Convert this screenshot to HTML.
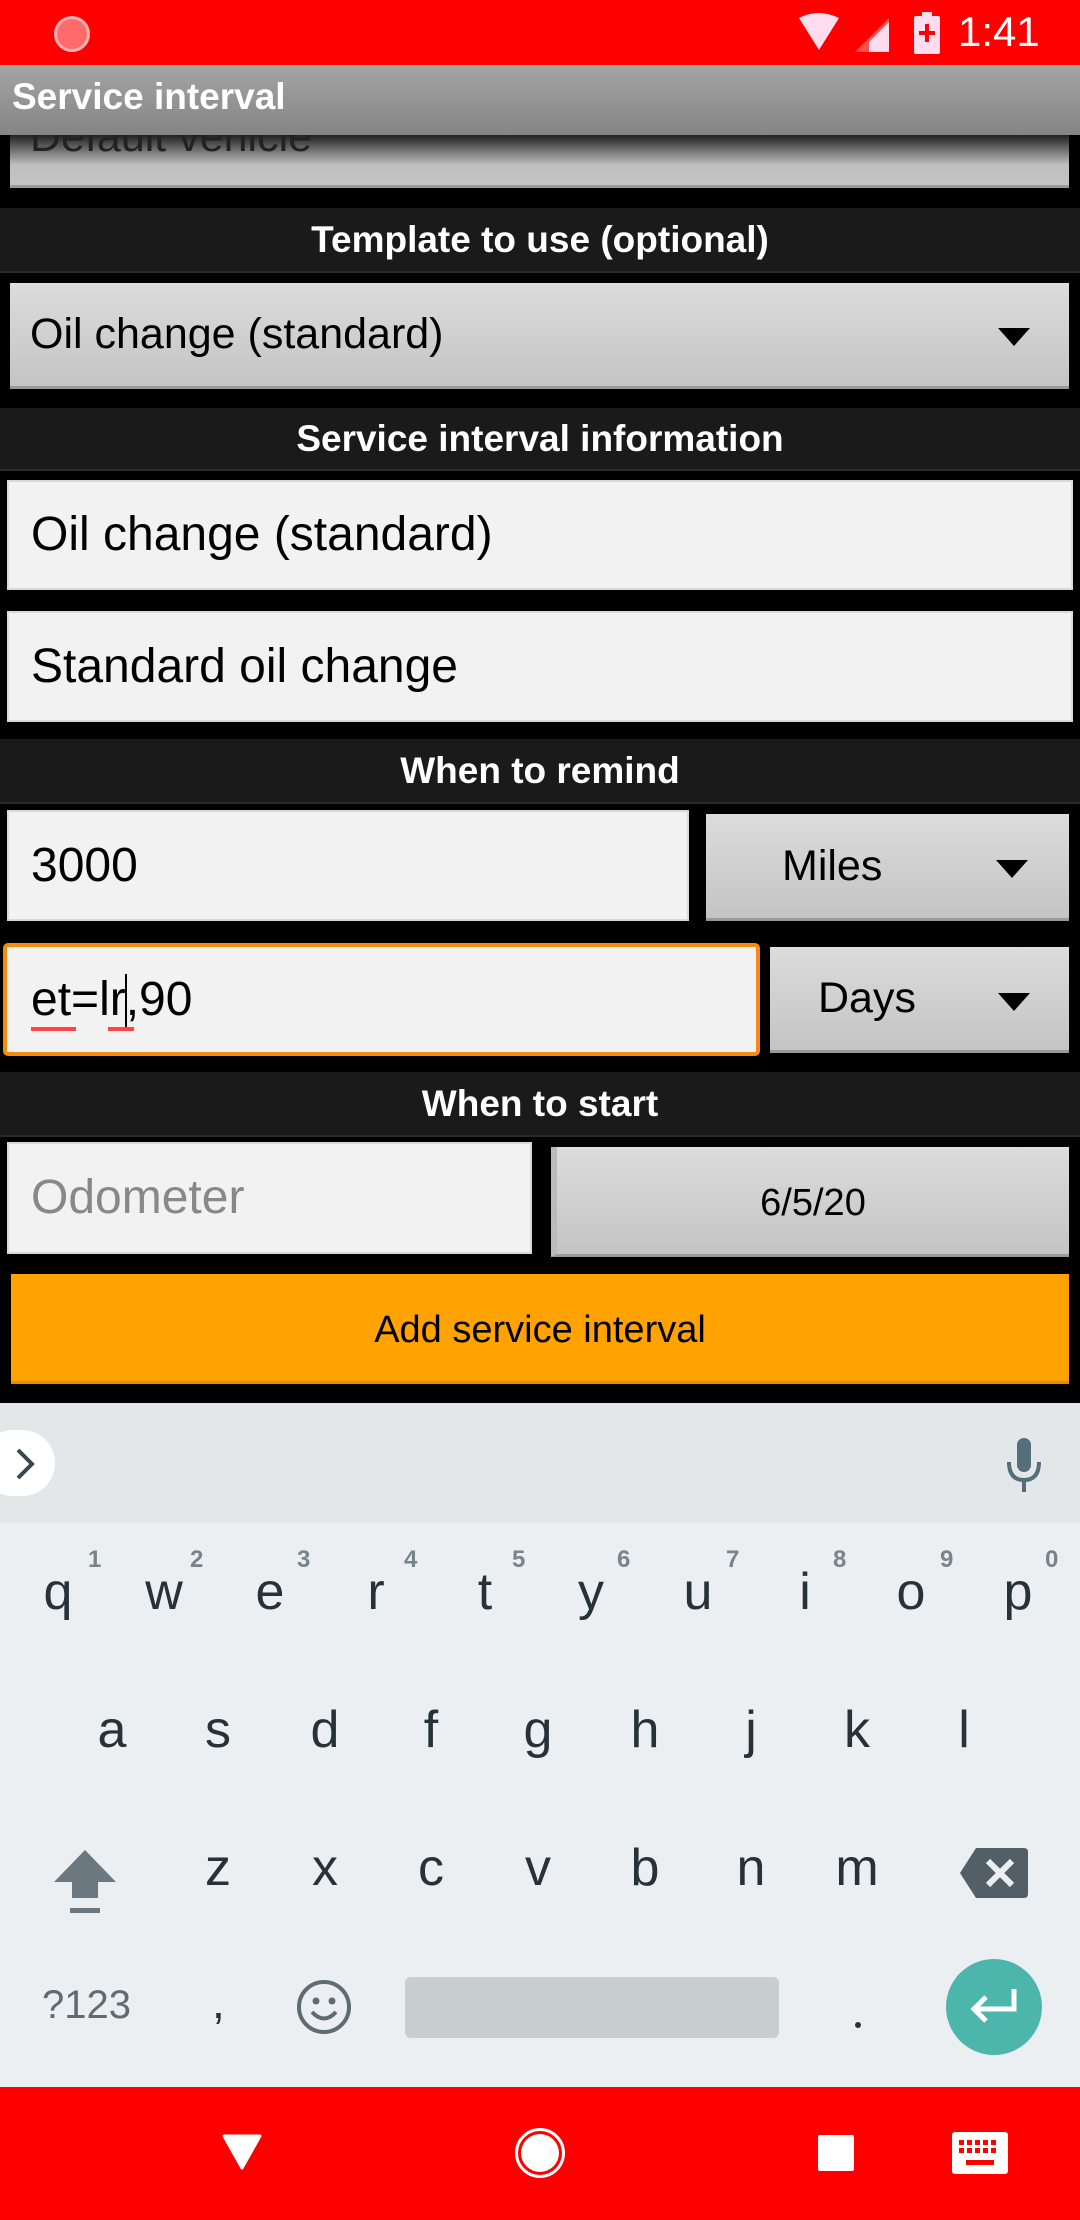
<!DOCTYPE html>
<html><head><meta charset="utf-8"><style>
*{margin:0;padding:0;box-sizing:border-box}
body{width:1080px;height:2220px;background:#000;position:relative;overflow:hidden;font-family:"Liberation Sans",sans-serif}
.a{position:absolute}
.hdr{position:absolute;left:0;width:1080px;background:#1a1a1a;color:#fff;font-weight:bold;font-size:37px;text-align:center;border-bottom:2px solid #2a2a2a}
.sp{position:absolute;background:linear-gradient(#dcdcdc,#c4c4c4);border-bottom:3px solid #9a9a9a;color:#000;font-size:43px}
.ed{position:absolute;background:#f2f2f2;border:2px solid #d8d8d8;color:#000;font-size:48px;padding-left:22px}
.arr{position:absolute;width:0;height:0;border-left:16px solid transparent;border-right:16px solid transparent;border-top:18px solid #000}
.k{position:absolute;font-size:52px;color:#263238;width:80px;text-align:center;font-family:"Liberation Sans",sans-serif}
.n{position:absolute;font-size:24px;color:#78848a;font-weight:bold}
</style></head><body>
<div class="sp" style="left:10px;top:135px;width:1059px;height:53px;background:linear-gradient(#202020,#bfbfbf 60%,#c4c4c4);overflow:hidden"><span class="a" style="left:20px;top:-22px;color:#222">Default vehicle</span></div>
<div class="a" style="left:0;top:0;width:1080px;height:65px;background:#f00"></div>
<div class="a" style="left:54px;top:16px;width:36px;height:36px;border-radius:50%;background:#ff6b6b;border:3px solid #ffb0b0"></div>
<svg class="a" style="left:795px;top:12px" width="120" height="42"><path d="M4 6 Q23 -4 44 6 L24 38 Z" fill="#fde"/><path d="M60 40 L94 40 L94 6 Z" fill="#ff5050"/><path d="M74 40 L94 40 L94 10 L74 30 Z" fill="#fde"/></svg>
<svg class="a" style="left:914px;top:12px" width="26" height="44"><rect x="0" y="4" width="26" height="38" rx="2" fill="#fde"/><rect x="8" y="0" width="10" height="5" fill="#fde"/><path d="M13 12 V30 M5 21 H21" stroke="#f00" stroke-width="4"/></svg>
<div class="a" style="left:958px;top:8px;color:#fff;font-size:42px">1:41</div>
<div class="a" style="left:0;top:65px;width:1080px;height:70px;background:linear-gradient(#a4a4a4,#858585)"></div>
<div class="a" style="left:12px;top:76px;color:#fff;font-weight:bold;font-size:37px">Service interval</div>
<div class="hdr" style="top:208px;height:65px;line-height:63px">Template to use (optional)</div>
<div class="sp" style="left:10px;top:283px;width:1059px;height:106px;line-height:103px;padding-left:20px">Oil change (standard)<div class="arr" style="left:988px;top:45px"></div></div>
<div class="hdr" style="top:408px;height:63px;line-height:61px">Service interval information</div>
<div class="ed" style="left:7px;top:480px;width:1066px;height:110px;line-height:106px">Oil change (standard)</div>
<div class="ed" style="left:7px;top:611px;width:1066px;height:111px;line-height:107px">Standard oil change</div>
<div class="hdr" style="top:739px;height:65px;line-height:63px">When to remind</div>
<div class="ed" style="left:7px;top:810px;width:682px;height:111px;line-height:107px">3000</div>
<div class="sp" style="left:706px;top:814px;width:363px;height:107px;line-height:104px;padding-left:76px">Miles<div class="arr" style="left:290px;top:46px"></div></div>
<div class="ed" style="left:3px;top:943px;width:757px;height:113px;line-height:105px;border:4px solid #f78a10;border-radius:5px;padding-left:24px">et=lr<span style="display:inline-block;width:2px;height:56px;background:#000;vertical-align:middle;margin:0 -1px"></span>,90
<div class="a" style="left:24px;top:80px;width:45px;height:4px;background:#f44"></div><div class="a" style="left:101px;top:80px;width:26px;height:4px;background:#f44"></div></div>
<div class="sp" style="left:770px;top:947px;width:299px;height:106px;line-height:103px;padding-left:48px">Days<div class="arr" style="left:228px;top:46px"></div></div>
<div class="hdr" style="top:1072px;height:65px;line-height:63px">When to start</div>
<div class="ed" style="left:7px;top:1142px;width:525px;height:112px;line-height:108px;color:#888">Odometer</div>
<div class="sp" style="left:551px;top:1147px;width:518px;height:110px;line-height:112px;text-align:center;font-size:38px;border-left:6px solid #bbb">6/5/20</div>
<div class="a" style="left:11px;top:1274px;width:1058px;height:110px;background:#ffa202;border-bottom:3px solid #e88a00;text-align:center;line-height:112px;font-size:38px;color:#000">Add service interval</div>
<div class="a" style="left:0;top:1403px;width:1080px;height:120px;background:#e4e7ea"></div>
<div class="a" style="left:-20px;top:1430px;width:75px;height:66px;border-radius:33px;background:#fff"></div>
<svg class="a" style="left:14px;top:1446px" width="24" height="36"><path d="M4 4 L18 18 L4 32" stroke="#37474f" stroke-width="4" fill="none"/></svg>
<svg class="a" style="left:1000px;top:1436px" width="50" height="64"><rect x="17" y="2" width="14" height="34" rx="7" fill="#546e7a"/><path d="M9 26 Q9 44 24 44 Q39 44 39 26 M24 44 V56" stroke="#546e7a" stroke-width="4" fill="none"/></svg>
<div class="a" style="left:0;top:1523px;width:1080px;height:564px;background:#eceff1"></div>
<div class="k" style="left:18px;top:1562px">q</div><div class="k" style="left:124px;top:1562px">w</div><div class="k" style="left:230px;top:1562px">e</div><div class="k" style="left:336px;top:1562px">r</div><div class="k" style="left:445px;top:1562px">t</div><div class="k" style="left:551px;top:1562px">y</div><div class="k" style="left:658px;top:1562px">u</div><div class="k" style="left:765px;top:1562px">i</div><div class="k" style="left:871px;top:1562px">o</div><div class="k" style="left:978px;top:1562px">p</div>
<div class="n" style="left:88px;top:1546px">1</div><div class="n" style="left:190px;top:1546px">2</div><div class="n" style="left:297px;top:1546px">3</div><div class="n" style="left:404px;top:1546px">4</div><div class="n" style="left:512px;top:1546px">5</div><div class="n" style="left:617px;top:1546px">6</div><div class="n" style="left:726px;top:1546px">7</div><div class="n" style="left:833px;top:1546px">8</div><div class="n" style="left:940px;top:1546px">9</div><div class="n" style="left:1045px;top:1546px">0</div>
<div class="k" style="left:72px;top:1700px">a</div><div class="k" style="left:178px;top:1700px">s</div><div class="k" style="left:285px;top:1700px">d</div><div class="k" style="left:391px;top:1700px">f</div><div class="k" style="left:498px;top:1700px">g</div><div class="k" style="left:605px;top:1700px">h</div><div class="k" style="left:711px;top:1700px">j</div><div class="k" style="left:817px;top:1700px">k</div><div class="k" style="left:924px;top:1700px">l</div>
<svg class="a" style="left:52px;top:1848px" width="66" height="70"><path d="M33 2 L64 34 H46 V50 H20 V34 H2 Z" fill="#6b787f"/><rect x="18" y="60" width="30" height="5" fill="#6b787f"/></svg>
<div class="k" style="left:178px;top:1838px">z</div><div class="k" style="left:285px;top:1838px">x</div><div class="k" style="left:391px;top:1838px">c</div><div class="k" style="left:498px;top:1838px">v</div><div class="k" style="left:605px;top:1838px">b</div><div class="k" style="left:711px;top:1838px">n</div><div class="k" style="left:817px;top:1838px">m</div>
<svg class="a" style="left:960px;top:1848px" width="68" height="50"><path d="M16 0 H64 Q68 0 68 4 V46 Q68 50 64 50 H16 L0 25 Z" fill="#525f66"/><path d="M28 13 L52 37 M52 13 L28 37" stroke="#eceff1" stroke-width="6"/></svg>
<div class="a" style="left:42px;top:1983px;font-size:40px;color:#5f6b72">?123</div>
<div class="a" style="left:212px;top:1975px;font-size:46px;color:#263238">,</div>
<svg class="a" style="left:296px;top:1979px" width="56" height="56"><circle cx="28" cy="28" r="25" stroke="#5f6b72" stroke-width="4" fill="none"/><circle cx="20" cy="22" r="3.5" fill="#5f6b72"/><circle cx="36" cy="22" r="3.5" fill="#5f6b72"/><path d="M16 33 Q28 46 40 33" stroke="#5f6b72" stroke-width="4" fill="none"/></svg>
<div class="a" style="left:405px;top:1977px;width:374px;height:61px;background:#c8cdd0;border-radius:6px"></div>
<div class="a" style="left:855px;top:2022px;width:6px;height:6px;background:#263238;border-radius:3px"></div>
<div class="a" style="left:946px;top:1959px;width:96px;height:96px;border-radius:50%;background:#4db6ac"></div>
<svg class="a" style="left:964px;top:1983px" width="60" height="48"><path d="M50 6 V26 H10 M22 14 L10 26 L22 38" stroke="#fff" stroke-width="5" fill="none"/></svg>
<div class="a" style="left:0;top:2087px;width:1080px;height:133px;background:#f00"></div>
<svg class="a" style="left:222px;top:2134px" width="40" height="36"><path d="M2 2 H38 L20 34 Z" fill="#fff" stroke="#fff" stroke-width="3" stroke-linejoin="round"/></svg>
<div class="a" style="left:515px;top:2128px;width:50px;height:50px;border-radius:50%;border:3px solid #fff"></div>
<div class="a" style="left:521px;top:2134px;width:38px;height:38px;border-radius:50%;background:#fff"></div>
<div class="a" style="left:818px;top:2135px;width:36px;height:36px;background:#fff;border-radius:2px"></div>
<svg class="a" style="left:952px;top:2132px" width="56" height="42"><rect width="56" height="42" rx="3" fill="#fff"/><g fill="#f00"><rect x="7" y="8" width="5" height="5"/><rect x="15" y="8" width="5" height="5"/><rect x="23" y="8" width="5" height="5"/><rect x="31" y="8" width="5" height="5"/><rect x="39" y="8" width="5" height="5"/><rect x="7" y="16" width="5" height="5"/><rect x="15" y="16" width="5" height="5"/><rect x="23" y="16" width="5" height="5"/><rect x="31" y="16" width="5" height="5"/><rect x="39" y="16" width="5" height="5"/><rect x="14" y="28" width="28" height="5"/></g></svg>
</body></html>
